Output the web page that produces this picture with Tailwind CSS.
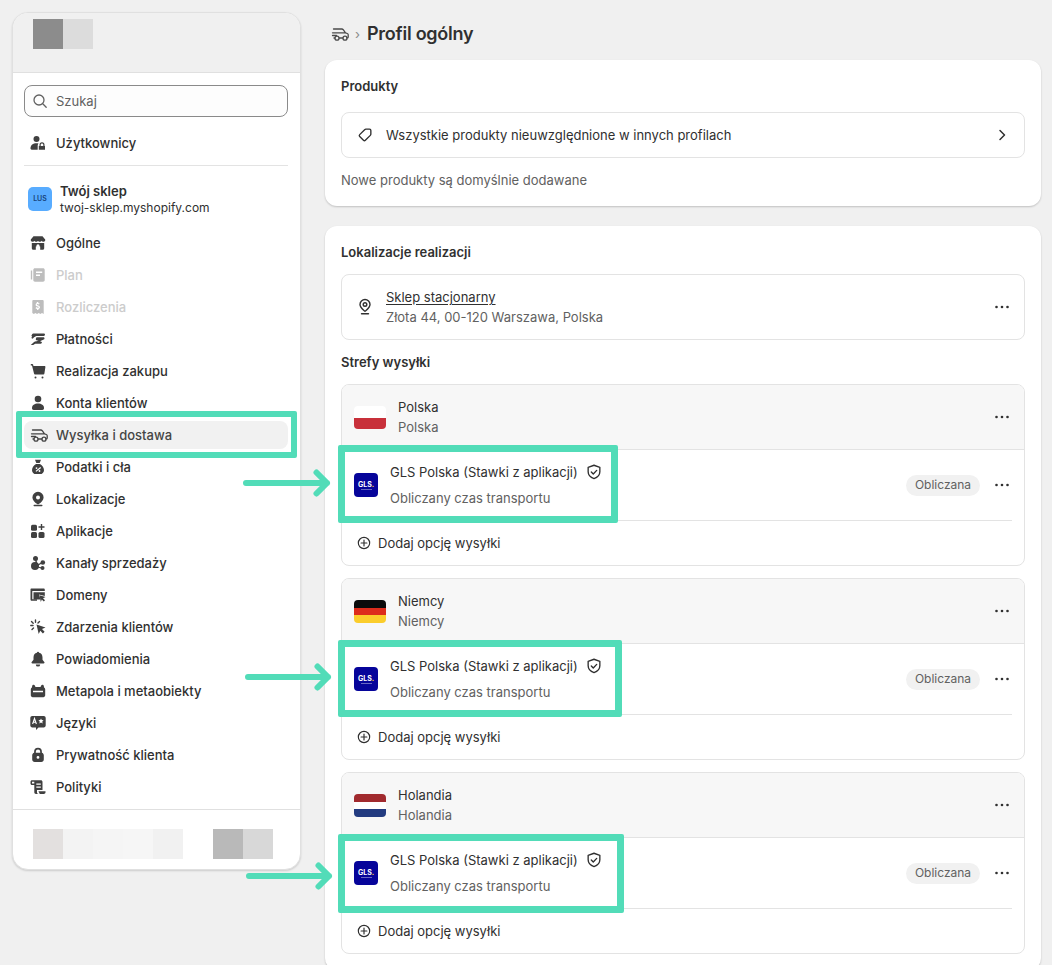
<!DOCTYPE html>
<html lang="pl">
<head>
  <meta charset="UTF-8" />
  <title>Profil ogólny</title>
  <script src="https://cdn.jsdelivr.net/npm/@tailwindcss/browser@4"></script>
</head>
<body class="relative h-[965px] overflow-hidden bg-[#f0f0f0] font-['Inter',sans-serif] text-[13px] leading-5 text-[#303030]">

  <!-- shared icons -->
  <svg class="hidden">
    <symbol id="truck" viewBox="0 0 20 20">
      <path fill="none" stroke="currentColor" stroke-width="1.300" stroke-linecap="round" stroke-linejoin="round" d="M2.500 5h8.300c.7 0 1.200.3 1.600.8l2.100 3 1.800.7c.5.200.9.700.9 1.200v2.200c0 .6-.4 1-1 1h-.6M1.500 8.800h13M1.500 11.500h4M8.300 14h3.400M3 14h.6"/>
      <circle cx="6" cy="14.200" r="2" fill="none" stroke="currentColor" stroke-width="1.300"/>
      <circle cx="14" cy="14.200" r="2" fill="none" stroke="currentColor" stroke-width="1.300"/>
    </symbol>
    <symbol id="dots" viewBox="0 0 20 20">
      <circle cx="4.500" cy="10" r="1.300" fill="currentColor"/><circle cx="10" cy="10" r="1.300" fill="currentColor"/><circle cx="15.500" cy="10" r="1.300" fill="currentColor"/>
    </symbol>
    <symbol id="shield" viewBox="0 0 20 20">
      <path fill="none" stroke="currentColor" stroke-width="1.500" stroke-linejoin="round" d="M10 2.500 3.500 4.800v5c0 3.500 2.600 6.200 6.500 7.500 3.900-1.300 6.500-4 6.500-7.500v-5z"/>
      <path fill="none" stroke="currentColor" stroke-width="1.500" stroke-linecap="round" stroke-linejoin="round" d="m7 10 2.200 2.200 3.800-4"/>
    </symbol>
    <symbol id="plus" viewBox="0 0 20 20">
      <circle cx="10" cy="10" r="6.300" fill="none" stroke="currentColor" stroke-width="1.300"/>
      <path fill="none" stroke="currentColor" stroke-width="1.300" stroke-linecap="round" d="M10 6.800v6.400M6.800 10h6.400"/>
    </symbol>
  </svg>

  <div class="flex items-start">
    <!-- sidebar -->
    <aside class="ml-3 mt-3 flex h-[858px] w-[289px] shrink-0 flex-col overflow-hidden rounded-2xl border border-[#e0e0e0] bg-white shadow-[0_1px_2px_rgba(0,0,0,0.15)]">
      <div class="flex h-[60px] shrink-0 items-start border-b border-[#e0e0e0] bg-[#f0f0f0] pl-5 pt-[6px]">
        <div class="h-[30px] w-[30px] bg-[#8c8c8c]"></div>
        <div class="h-[30px] w-[30px] bg-[#dcdcdc]"></div>
      </div>

      <div class="flex-1 pl-[11px] pr-3 pt-3">
        <div class="flex h-8 items-center gap-2 rounded-lg border border-[#8a8a8a] bg-[#fdfdfd] px-[7px] text-[#616161]">
          <svg class="h-4 w-4" viewBox="0 0 16 16" fill="none" stroke="currentColor" stroke-width="1.300" stroke-linecap="round"><circle cx="7" cy="7" r="5"/><path d="m11 11 3.200 3.200"/></svg>
          <span>Szukaj</span>
        </div>

        <div class="mt-[10px] flex h-8 items-center gap-[10px] pl-[6px] font-medium">
          <svg class="h-4 w-4 text-[#404040]" viewBox="0 0 16 16" fill="currentColor"><circle cx="6.500" cy="4" r="3"/><path d="M.500 13.500C.500 10 3 8.200 6.500 8.200c.8 0 1.400.1 2 .3-.5.5-.8 1.200-.8 2v4.200H1.700c-.7 0-1.200-.5-1.200-1.200z"/><path fill-rule="evenodd" d="M9.500 11V9.700a2.500 2.500 0 0 1 5 0V11h.5v3.800H8.800V11zm1.200 0h2.600V9.700a1.300 1.300 0 0 0-2.600 0z"/></svg>
          <span>Użytkownicy</span>
        </div>

        <div class="mt-[6px] h-px bg-[#e3e3e3]"></div>

        <div class="mt-4 flex h-[34px] items-center gap-2 pl-1">
          <div class="flex h-6 w-6 items-center justify-center rounded-[5px] bg-[#58acff] text-[7px] font-semibold text-[#17437a]">LUS</div>
          <div class="-mt-[1px]">
            <div class="h-[18px] text-[13px] leading-[18px] font-semibold">Twój sklep</div>
            <div class="h-4 text-[12px] leading-4">twoj-sklep.myshopify.com</div>
          </div>
        </div>

        <nav class="mt-[11px] flex flex-col font-medium">
          <div class="flex h-8 items-center gap-[10px] pl-[6px]">
            <svg class="h-4 w-4 text-[#404040]" viewBox="0 0 16 16" fill="currentColor"><path d="M3.500 1.200h9l2.700 3.300c.3 1.300-.6 2.300-1.700 2.300-.9 0-1.500-.5-1.800-1.100-.4.600-1 1.100-1.900 1.100S8.400 6.300 8 5.700c-.4.600-1 1.100-1.800 1.100S4.700 6.300 4.300 5.700c-.3.600-.9 1.100-1.800 1.100-1.100 0-2-1-1.700-2.300z"/><path fill-rule="evenodd" d="M1.800 8h12.400v5.300c0 .9-.6 1.500-1.500 1.500H3.300c-.9 0-1.500-.6-1.500-1.500zm4 6.800h4.400v-3.300h-.6v-.6a1.600 1.600 0 0 0-3.200 0v.6h-.6z"/></svg>
            <span>Ogólne</span>
          </div>
          <div class="flex h-8 items-center gap-[10px] pl-[6px] text-[#cccccc]">
            <svg class="h-4 w-4 text-[#bdbdbd]" viewBox="0 0 16 16" fill="currentColor"><path d="M.800 3.500h1.400v9H.800z"/><path fill-rule="evenodd" d="M5 1.200h8c1 0 1.700.7 1.700 1.700v10.200c0 1-.7 1.700-1.700 1.700H5c-1 0-1.700-.7-1.700-1.700V2.900c0-1 .7-1.700 1.700-1.700M6 4.500V6h6.200V4.500zm0 3V9h4V7.500z"/></svg>
            <span>Plan</span>
          </div>
          <div class="flex h-8 items-center gap-[10px] pl-[6px] text-[#cccccc]">
            <svg class="h-4 w-4 text-[#bdbdbd]" viewBox="0 0 16 16" fill="currentColor"><path fill-rule="evenodd" d="M3.500 1h9c.7 0 1.200.5 1.200 1.200V15l-1.700-1-1.700 1-1.500-1-1.800 1-1.500-1-1.700 1-1.500-1V2.200C2.300 1.500 2.800 1 3.500 1m3.300 3.100c-.8.300-1.200.9-1.200 1.600 0 1 .8 1.500 1.700 1.800l1 .3c.4.100.5.300.5.500 0 .3-.3.500-.8.500-.6 0-1.300-.3-1.800-.7l-.7 1.100c.5.400 1.100.7 1.600.8v.9h1.300v-.9c1-.3 1.600-1 1.600-1.800 0-1-.7-1.500-1.700-1.800l-1-.3c-.3-.1-.5-.2-.5-.5s.3-.5.700-.5c.5 0 1 .2 1.500.5l.7-1.100c-.5-.3-1-.5-1.400-.6V3H6.800z"/></svg>
            <span>Rozliczenia</span>
          </div>
          <div class="flex h-8 items-center gap-[10px] pl-[6px]">
            <svg class="h-4 w-4 text-[#404040]" viewBox="0 0 16 16" fill="currentColor"><path d="M3.200 2.500h10.500c.7 0 1.300.5 1.300 1.200s-.6 1.200-1.300 1.200H7.500C6 4.900 4.700 5.500 3.800 6.500L2.700 7.800 1.300 7l.9-1.500-.9-.5 1-2c.2-.3.500-.5.900-.5z"/><path d="M6.500 6.200h6.800c.7 0 1.200.5 1.200 1.200 0 .5-.3.900-.8 1.100l-3.800 1.700 1 .2c.6.100 1 .6 1 1.100 0 .7-.5 1.200-1.200 1.200H5.200L3.200 14H.800l3-2.800c.7-.6 1.500-1 2.400-1h.5l1.800-.8H7c-.7 0-1.200-.4-1.200-1.100 0-.6.200-1.100.7-2.100z"/></svg>
            <span>Płatności</span>
          </div>
          <div class="flex h-8 items-center gap-[10px] pl-[6px]">
            <svg class="h-4 w-4 text-[#404040]" viewBox="0 0 16 16" fill="currentColor"><path d="M.800 1h1.400c.5 0 .9.300 1 .8L3.400 3h11.100c.6 0 1 .5.900 1.100l-1 6.500c-.1.500-.5.900-1 .9H5c-.5 0-.9-.4-1-.9L2 2.400H.8z"/><circle cx="5.500" cy="14.400" r="1"/><circle cx="12.500" cy="14.400" r="1"/></svg>
            <span>Realizacja zakupu</span>
          </div>
          <div class="flex h-8 items-center gap-[10px] pl-[6px]">
            <svg class="h-4 w-4 text-[#404040]" viewBox="0 0 16 16" fill="currentColor"><circle cx="8" cy="4" r="3.300"/><path d="M2 13.200C2 10.200 4.600 8.600 8 8.600s6 1.600 6 4.600c0 1-.7 1.700-1.700 1.700H3.700c-1 0-1.700-.7-1.700-1.700"/></svg>
            <span>Konta klientów</span>
          </div>
          <div class="my-[2px] flex h-7 items-center gap-[10px] rounded-lg bg-[#f1f1f1] pl-[6px] text-[#454545]">
            <svg class="-mr-1 h-5 w-5 shrink-0" viewBox="0 0 20 20"><use href="#truck"/></svg>
            <span>Wysyłka i dostawa</span>
          </div>
          <div class="flex h-8 items-center gap-[10px] pl-[6px]">
            <svg class="h-4 w-4 text-[#404040]" viewBox="0 0 16 16" fill="currentColor"><path d="M5 .800h6L9.700 4H6.300z"/><path fill-rule="evenodd" d="M6 5h4c2.500 1.500 4 3.800 4 6.200 0 2.400-1.700 3.900-4 3.900H6c-2.300 0-4-1.500-4-3.900C2 8.800 3.500 6.500 6 5M6.500 8.200a.900.900 0 1 0 0 1.800.900.900 0 0 0 0-1.800m3.800-.1L5.500 12l.8.800 4.800-3.900zm-.8 3a.900.900 0 1 0 0 1.800.900.900 0 0 0 0-1.800"/></svg>
            <span>Podatki i cła</span>
          </div>
          <div class="flex h-8 items-center gap-[10px] pl-[6px]">
            <svg class="h-4 w-4 text-[#404040]" viewBox="0 0 16 16" fill="currentColor"><path fill-rule="evenodd" d="M8 .800a5.600 5.600 0 0 1 5.600 5.600c0 2.600-2.200 4.700-4.800 6.700-.5.400-1.100.4-1.600 0-2.600-2-4.800-4.100-4.800-6.700A5.600 5.600 0 0 1 8 .800m0 3.600a2 2 0 1 0 0 4 2 2 0 0 0 0-4"/><rect x="3.500" y="13.800" width="9" height="1.400" rx=".7"/></svg>
            <span>Lokalizacje</span>
          </div>
          <div class="flex h-8 items-center gap-[10px] pl-[6px]">
            <svg class="h-4 w-4 text-[#404040]" viewBox="0 0 16 16" fill="currentColor"><rect x="1" y="1.800" width="6" height="6" rx="1.500"/><rect x="1" y="9" width="6" height="6" rx="1.500"/><rect x="8.500" y="9" width="6" height="6" rx="1.500"/><path d="M10.800 1h1.400v2.300h2.300v1.400h-2.300V7h-1.400V4.700H8.500V3.300h2.300z"/></svg>
            <span>Aplikacje</span>
          </div>
          <div class="flex h-8 items-center gap-[10px] pl-[6px]">
            <svg class="h-4 w-4 text-[#404040]" viewBox="0 0 16 16" fill="currentColor"><circle cx="5.500" cy="3.500" r="2.500"/><circle cx="12.800" cy="7.500" r="2.300"/><circle cx="5" cy="11" r="4"/><circle cx="12.500" cy="13" r="2"/><path d="m5 4 1.200-.2 1 4.200-1.500.5zM7.500 9.500l4.500-2.500.6 1-4.200 2.500zM8 11.500l3.800 1 -.3 1-4-1z"/></svg>
            <span>Kanały sprzedaży</span>
          </div>
          <div class="flex h-8 items-center gap-[10px] pl-[6px]">
            <svg class="h-4 w-4 text-[#404040]" viewBox="0 0 16 16" fill="currentColor"><path d="M1.500 1.500h12c.8 0 1.300.5 1.300 1.300V4H.500V2.500c0-.6.400-1 1-1"/><path d="M.500 4h1.800v8.300H7v1.500H1.800c-.8 0-1.300-.5-1.300-1.300z"/><path d="M3.500 5.200h11.300V9L9 7.500l1.500 5H3.500z"/><path d="m9.500 8.200 6 1.800-2.500 1.200 2 2-1.200 1.200-2-2-1 2.500z"/></svg>
            <span>Domeny</span>
          </div>
          <div class="flex h-8 items-center gap-[10px] pl-[6px]">
            <svg class="h-4 w-4 text-[#404040]" viewBox="0 0 16 16" fill="currentColor"><path d="m6.500 5.500 9 3-3.500 1.600 2.600 2.600-1.700 1.700-2.600-2.600L8.700 15z"/><path fill="none" stroke="currentColor" stroke-width="1.400" stroke-linecap="round" d="M5.500 1v2.200M1.500 2.500l1.700 1.700M9.500 2.500 8 4M.800 6.500H3M3.500 9 2 10.500"/></svg>
            <span>Zdarzenia klientów</span>
          </div>
          <div class="flex h-8 items-center gap-[10px] pl-[6px]">
            <svg class="h-4 w-4 text-[#404040]" viewBox="0 0 16 16" fill="currentColor"><path d="M8 .800c.6 0 1 .4 1.100 1 2.200.5 3.400 2.200 3.400 4.700v2.300l1.800 2.100c.5.600.1 1.500-.7 1.500H2.400c-.8 0-1.200-.9-.7-1.500l1.800-2.100V6.500c0-2.500 1.200-4.200 3.400-4.700.1-.6.500-1 1.100-1"/><path d="M5.800 13.400h4.400a2.200 2.200 0 0 1-4.400 0"/></svg>
            <span>Powiadomienia</span>
          </div>
          <div class="flex h-8 items-center gap-[10px] pl-[6px]">
            <svg class="h-4 w-4 text-[#404040]" viewBox="0 0 16 16" fill="currentColor"><path fill-rule="evenodd" d="M3.500 1.800c.6 0 1.100.3 1.300.8l.7 1.400h5l.7-1.400c.2-.5.700-.8 1.300-.8s1.200.5 1.300 1.100l.3 1.700c.7.300 1.100.9 1.100 1.700v6c0 1.100-.8 1.900-1.900 1.900H2.700C1.600 14.200.8 13.400.8 12.300v-6c0-.8.400-1.400 1.100-1.700l.3-1.700c.1-.6.700-1.100 1.300-1.100M3 7.700v1.600h10V7.700z"/></svg>
            <span>Metapola i metaobiekty</span>
          </div>
          <div class="flex h-8 items-center gap-[10px] pl-[6px]">
            <svg class="h-4 w-4 text-[#404040]" viewBox="0 0 16 16"><path fill="currentColor" d="M2.200 1h11.600C14.900 1 15.700 1.800 15.700 2.900v7.600c0 1-.8 1.900-1.900 1.900H8.500L6 15v-2.600H2.200c-1 0-1.900-.9-1.900-1.900V2.900C.3 1.800 1.100 1 2.200 1"/><path fill="none" stroke="#fff" stroke-width="1.100" d="m2.600 9 1.900-5.500L6.400 9M3.300 7.300h2.400"/><path fill="#fff" d="m11 3.500.8 1.600 1.800.2-1.300 1.300.3 1.800-1.600-.8-1.600.8.300-1.800-1.300-1.300 1.800-.2z"/></svg>
            <span>Języki</span>
          </div>
          <div class="flex h-8 items-center gap-[10px] pl-[6px]">
            <svg class="h-4 w-4 text-[#404040]" viewBox="0 0 16 16" fill="currentColor"><path fill-rule="evenodd" d="M8 .800a3.900 3.900 0 0 1 3.900 3.900v1.100c1.100.3 1.900 1.300 1.900 2.500v4.200c0 1.400-1.100 2.500-2.500 2.500H4.700c-1.400 0-2.500-1.100-2.500-2.500V8.300c0-1.200.8-2.200 1.900-2.500V4.700A3.900 3.900 0 0 1 8 .800m0 1.700a2.200 2.200 0 0 0-2.200 2.200v1h4.400v-1A2.200 2.200 0 0 0 8 2.500m0 6.500a1.400 1.400 0 1 0 0 2.800A1.400 1.400 0 0 0 8 9"/></svg>
            <span>Prywatność klienta</span>
          </div>
          <div class="flex h-8 items-center gap-[10px] pl-[6px]">
            <svg class="h-4 w-4 text-[#404040]" viewBox="0 0 16 16" fill="currentColor"><path fill-rule="evenodd" d="M2 1.200h8.800c1 0 1.700.7 1.700 1.700V11H7v2.300c0 .9.700 1.600 1.500 1.700H6c-1 0-1.700-.7-1.700-1.700V6H2C1.100 6 .5 5.300.5 4.500V2.700c0-.8.700-1.500 1.500-1.500M2 2.700v1.800h2.300V2.900c0-.1-.1-.2-.2-.2zm4.300 1.800v1.300h4.500V4.500zm0 3v1.300h4.500V7.500z"/><path d="M8.500 12.300h7v1c0 1-.7 1.700-1.700 1.700H9.500c.6-.7-1-1.700-1-2.700"/></svg>
            <span>Polityki</span>
          </div>
        </nav>
      </div>

      <div class="h-[60px] shrink-0 border-t border-[#e0e0e0] pl-5 pt-[19px]">
        <div class="flex">
          <div class="h-[30px] w-[30px] bg-[#e3e0df]"></div>
          <div class="h-[30px] w-[30px] bg-[#f3f3f3]"></div>
          <div class="h-[30px] w-[30px] bg-[#f5f5f5]"></div>
          <div class="h-[30px] w-[30px] bg-[#f6f6f6]"></div>
          <div class="h-[30px] w-[30px] bg-[#f1f1f1]"></div>
          <div class="ml-[30px] h-[30px] w-[30px] bg-[#b9b9b9]"></div>
          <div class="h-[30px] w-[30px] bg-[#d8d8d8]"></div>
        </div>
      </div>
    </aside>

    <!-- main column -->
    <main class="ml-6 w-[716px] shrink-0 pt-[22px]">
      <div class="flex h-6 items-center pl-[6px]">
        <svg class="h-5 w-5 text-[#4a4a4a]" viewBox="0 0 20 20"><use href="#truck"/></svg>
        <span class="ml-1 text-[#8a8a8a]">›</span>
        <h1 class="ml-[7px] text-[18px] font-semibold tracking-[-0.25px] text-[#303030]">Profil ogólny</h1>
      </div>

      <section class="mt-[14px] rounded-xl bg-white p-4 shadow-[0_1px_2px_rgba(0,0,0,0.2)]">
        <h2 class="h-5 font-semibold">Produkty</h2>
        <div class="mt-4 flex h-[46px] items-center rounded-lg border border-[#e3e3e3] px-[14px]">
          <svg class="h-[18px] w-[18px]" viewBox="0 0 20 20" fill="none" stroke="currentColor" stroke-width="1.500" stroke-linejoin="round"><path d="M11 3.500h4c.8 0 1.500.7 1.500 1.500v4c0 .6-.2 1-.6 1.400l-5.500 5.500c-.6.600-1.500.6-2.100 0l-4.200-4.200c-.6-.6-.6-1.500 0-2.100l5.500-5.500c.4-.4.800-.6 1.400-.6z"/></svg>
          <span class="ml-3 flex-1">Wszystkie produkty nieuwzględnione w innych profilach</span>
          <svg class="h-4 w-4" viewBox="0 0 16 16" fill="none" stroke="currentColor" stroke-width="1.500" stroke-linecap="round" stroke-linejoin="round"><path d="m6 3.500 4.500 4.500L6 12.500"/></svg>
        </div>
        <p class="mt-3 text-[#616161]">Nowe produkty są domyślnie dodawane</p>
      </section>

      <section class="mt-5 rounded-xl bg-white p-4 shadow-[0_1px_2px_rgba(0,0,0,0.2)]">
        <h2 class="h-5 font-semibold">Lokalizacje realizacji</h2>
        <div class="mt-3 flex h-[66px] items-center rounded-lg border border-[#e3e3e3] pl-[14px] pr-3">
          <svg class="h-5 w-5 -ml-[1px]" viewBox="0 0 20 20" fill="none" stroke="currentColor" stroke-width="1.400" stroke-linecap="round" stroke-linejoin="round"><path d="M10 14.300C8.500 13 5 10.700 5 7.500a5 5 0 0 1 10 0c0 3.200-3.500 5.500-5 6.800z"/><circle cx="10" cy="7.500" r="1.800"/><path d="M6.500 16.800h7"/></svg>
          <div class="ml-[11px] flex-1">
            <div class="underline underline-offset-2">Sklep stacjonarny</div>
            <div class="text-[#616161]">Złota 44, 00-120 Warszawa, Polska</div>
          </div>
          <svg class="h-5 w-5" viewBox="0 0 20 20"><use href="#dots"/></svg>
        </div>
        <h2 class="mt-3 h-5 font-semibold">Strefy wysyłki</h2>

        <div class="mt-3 flex flex-col gap-3">
          <!-- Polska -->
          <div class="overflow-hidden rounded-lg border border-[#e3e3e3]">
            <div class="flex h-[65px] items-center border-b border-[#e3e3e3] bg-[#f7f7f7] pl-3 pr-3">
              <div class="mt-[1px] flex h-[23px] w-8 flex-col overflow-hidden rounded-[4px]">
                <div class="flex-1 bg-[#ffffff]"></div>
                <div class="flex-1 bg-[#c8303a]"></div>
              </div>
              <div class="ml-3 flex-1">
                <div>Polska</div>
                <div class="text-[#616161]">Polska</div>
              </div>
              <svg class="h-5 w-5" viewBox="0 0 20 20"><use href="#dots"/></svg>
            </div>
            <div class="flex h-[70px] items-center pl-3 pr-3">
              <div class="flex h-6 w-6 flex-col items-center justify-center rounded-[4px] bg-[#06049a] text-[7px] leading-none font-bold text-white">
                <span>GLS<span class="text-[#fbcd2c]">.</span></span>
                <span class="mt-[1px] h-px w-[11px] bg-white/40"></span>
              </div>
              <div class="mb-[3px] ml-3 flex-1">
                <div class="flex h-[26px] items-center">GLS Polska (Stawki z aplikacji)<svg class="ml-[7px] h-[18px] w-[18px]" viewBox="0 0 20 20"><use href="#shield"/></svg></div>
                <div class="mt-[3px] text-[#616161]">Obliczany czas transportu</div>
              </div>
              <span class="flex h-[21px] w-[74px] items-center justify-center rounded-full bg-[#f1f1f1] text-[12px] text-[#616161]">Obliczana</span>
              <svg class="ml-3 h-5 w-5" viewBox="0 0 20 20"><use href="#dots"/></svg>
            </div>
            <div class="ml-[15px] mr-3 h-px bg-[#e3e3e3]"></div>
            <div class="flex h-[44px] items-center pl-[13px]">
              <svg class="h-[18px] w-[18px]" viewBox="0 0 20 20"><use href="#plus"/></svg>
              <span class="ml-[5px]">Dodaj opcję wysyłki</span>
            </div>
          </div>

          <!-- Niemcy -->
          <div class="overflow-hidden rounded-lg border border-[#e3e3e3]">
            <div class="flex h-[65px] items-center border-b border-[#e3e3e3] bg-[#f7f7f7] pl-3 pr-3">
              <div class="mt-[1px] flex h-[23px] w-8 flex-col overflow-hidden rounded-[4px]">
                <div class="flex-1 bg-[#0b0b0b]"></div>
                <div class="flex-1 bg-[#dd2c1c]"></div>
                <div class="flex-1 bg-[#fbcd2c]"></div>
              </div>
              <div class="ml-3 flex-1">
                <div>Niemcy</div>
                <div class="text-[#616161]">Niemcy</div>
              </div>
              <svg class="h-5 w-5" viewBox="0 0 20 20"><use href="#dots"/></svg>
            </div>
            <div class="flex h-[70px] items-center pl-3 pr-3">
              <div class="flex h-6 w-6 flex-col items-center justify-center rounded-[4px] bg-[#06049a] text-[7px] leading-none font-bold text-white">
                <span>GLS<span class="text-[#fbcd2c]">.</span></span>
                <span class="mt-[1px] h-px w-[11px] bg-white/40"></span>
              </div>
              <div class="mb-[3px] ml-3 flex-1">
                <div class="flex h-[26px] items-center">GLS Polska (Stawki z aplikacji)<svg class="ml-[7px] h-[18px] w-[18px]" viewBox="0 0 20 20"><use href="#shield"/></svg></div>
                <div class="mt-[3px] text-[#616161]">Obliczany czas transportu</div>
              </div>
              <span class="flex h-[21px] w-[74px] items-center justify-center rounded-full bg-[#f1f1f1] text-[12px] text-[#616161]">Obliczana</span>
              <svg class="ml-3 h-5 w-5" viewBox="0 0 20 20"><use href="#dots"/></svg>
            </div>
            <div class="ml-[15px] mr-3 h-px bg-[#e3e3e3]"></div>
            <div class="flex h-[44px] items-center pl-[13px]">
              <svg class="h-[18px] w-[18px]" viewBox="0 0 20 20"><use href="#plus"/></svg>
              <span class="ml-[5px]">Dodaj opcję wysyłki</span>
            </div>
          </div>

          <!-- Holandia -->
          <div class="overflow-hidden rounded-lg border border-[#e3e3e3]">
            <div class="flex h-[65px] items-center border-b border-[#e3e3e3] bg-[#f7f7f7] pl-3 pr-3">
              <div class="mt-[1px] flex h-[23px] w-8 flex-col overflow-hidden rounded-[4px]">
                <div class="flex-1 bg-[#a12a2e]"></div>
                <div class="flex-1 bg-[#ffffff]"></div>
                <div class="flex-1 bg-[#233b80]"></div>
              </div>
              <div class="ml-3 flex-1">
                <div>Holandia</div>
                <div class="text-[#616161]">Holandia</div>
              </div>
              <svg class="h-5 w-5" viewBox="0 0 20 20"><use href="#dots"/></svg>
            </div>
            <div class="flex h-[70px] items-center pl-3 pr-3">
              <div class="flex h-6 w-6 flex-col items-center justify-center rounded-[4px] bg-[#06049a] text-[7px] leading-none font-bold text-white">
                <span>GLS<span class="text-[#fbcd2c]">.</span></span>
                <span class="mt-[1px] h-px w-[11px] bg-white/40"></span>
              </div>
              <div class="mb-[3px] ml-3 flex-1">
                <div class="flex h-[26px] items-center">GLS Polska (Stawki z aplikacji)<svg class="ml-[7px] h-[18px] w-[18px]" viewBox="0 0 20 20"><use href="#shield"/></svg></div>
                <div class="mt-[3px] text-[#616161]">Obliczany czas transportu</div>
              </div>
              <span class="flex h-[21px] w-[74px] items-center justify-center rounded-full bg-[#f1f1f1] text-[12px] text-[#616161]">Obliczana</span>
              <svg class="ml-3 h-5 w-5" viewBox="0 0 20 20"><use href="#dots"/></svg>
            </div>
            <div class="ml-[15px] mr-3 h-px bg-[#e3e3e3]"></div>
            <div class="flex h-[44px] items-center pl-[13px]">
              <svg class="h-[18px] w-[18px]" viewBox="0 0 20 20"><use href="#plus"/></svg>
              <span class="ml-[5px]">Dodaj opcję wysyłki</span>
            </div>
          </div>
        </div>
      </section>
    </main>
  </div>

  <!-- green annotations lying over the screenshot -->
  <div class="absolute left-[16px] top-[411px] h-[47px] w-[281px] rounded-[2px] border-[6px] border-[#52dcb8]"></div>
  <div class="absolute left-[338px] top-[445px] h-[78px] w-[280px] rounded-[2px] border-[7px] border-[#52dcb8]"></div>
  <div class="absolute left-[338px] top-[640px] h-[77px] w-[284px] rounded-[2px] border-[7px] border-[#52dcb8]"></div>
  <div class="absolute left-[338px] top-[834px] h-[79px] w-[286px] rounded-[2px] border-[7px] border-[#52dcb8]"></div>

  <svg class="absolute left-[240px] top-[468px]" width="95" height="30" fill="none" stroke="#52dcb8" stroke-width="6" stroke-linecap="round" stroke-linejoin="round"><path d="M6 15h81M76.500 4.500 87 15 76.500 25.500"/></svg>
  <svg class="absolute left-[242px] top-[662px]" width="95" height="30" fill="none" stroke="#52dcb8" stroke-width="6" stroke-linecap="round" stroke-linejoin="round"><path d="M6 15h80M75.500 4.500 86 15 75.500 25.500"/></svg>
  <svg class="absolute left-[243px] top-[861px]" width="95" height="30" fill="none" stroke="#52dcb8" stroke-width="6" stroke-linecap="round" stroke-linejoin="round"><path d="M6 15h80M75.500 4.500 86 15 75.500 25.500"/></svg>
</body>
</html>
